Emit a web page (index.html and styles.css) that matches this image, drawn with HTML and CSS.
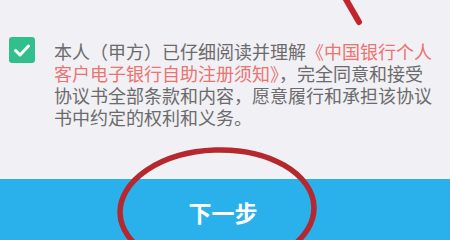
FILE: index.html
```html
<!DOCTYPE html>
<html lang="zh-CN">
<head>
<meta charset="utf-8">
<title>协议确认</title>
<link rel="stylesheet" href="styles.css">
</head>
<body>
<div class="page">
  <div class="agree">
    <span class="check">
      <svg viewBox="0 0 26 26" width="26" height="26"><path d="M6.5 13.5 L11 18 L19.5 9" fill="none" stroke="#fff" stroke-width="3" stroke-linecap="round" stroke-linejoin="round"/></svg>
    </span>
    <p class="terms">本人（甲方）已仔细阅读并理解<span class="link">《中国银行个人客户电子银行自助注册须知》</span>，完全同意和接受协议书全部条款和内容，愿意履行和承担该协议书中约定的权利和义务。</p>
  </div>
  <div class="footer">
    <button class="next">下一步</button>
  </div>
  <svg class="marks" width="450" height="240" viewBox="0 0 450 240">
    <line x1="344" y1="-4" x2="359" y2="22" stroke="#c0262c" stroke-width="6" stroke-linecap="round"/>
    <ellipse cx="217" cy="210" rx="97" ry="60" fill="none" stroke="#b5282d" stroke-width="5.5" transform="rotate(-2 217 210)"/>
  </svg>
</div>
</body>
</html>
```

FILE: styles.css
```css
html, body {
  margin: 0;
  padding: 0;
}
body {
  background: #f1f0f5;
  font-family: "Noto Sans CJK SC", "Noto Sans", sans-serif;
}
.page {
  position: relative;
  width: 450px;
  height: 240px;
  overflow: hidden;
  display: flex;
  flex-direction: column;
}
.agree {
  display: flex;
  align-items: flex-start;
  gap: 19px;
  padding: 37px 0 0 9px;
}
.check {
  flex: none;
  width: 26px;
  height: 26px;
  border-radius: 3px;
  background: #30bf8d;
  display: flex;
}
.terms {
  margin: 3px 0 0 0;
  width: 380px;
  font-size: 18px;
  line-height: 22px;
  color: #6b6b6b;
}
.link {
  color: #ea7470;
}
.footer {
  margin-top: auto;
  height: 61px;
  background: #2ab1ec;
  display: flex;
  justify-content: center;
  align-items: center;
}
.next {
  border: 0;
  background: transparent;
  color: #fff;
  font-family: "Noto Sans CJK SC", sans-serif;
  font-size: 23px;
  font-weight: 700;
  padding: 4px 0 0 0;
  margin-left: -4px;
}
.marks {
  position: absolute;
  left: 0;
  top: 0;
  pointer-events: none;
}
```
